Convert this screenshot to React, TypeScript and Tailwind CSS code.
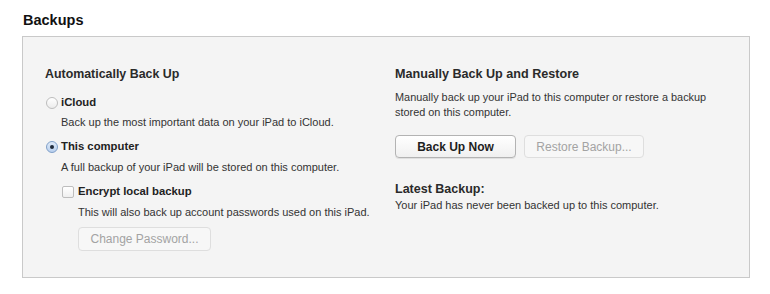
const font = { fontFamily: '"Liberation Sans", Arial, sans-serif' }

function Radio({ checked }: { checked?: boolean }) {
  return checked ? (
    <span className="flex h-[12px] w-[12px] items-center justify-center rounded-full border border-[#7f9fc8] bg-gradient-to-b from-[#dfeaf8] to-[#b9d0ee]">
      <span className="h-[4px] w-[4px] rounded-full bg-[#1f2a3a]" />
    </span>
  ) : (
    <span className="h-[12px] w-[12px] rounded-full border border-[#bdbdbd] bg-gradient-to-b from-white to-[#ececec]" />
  )
}

function Button({ label, disabled, w }: { label: string; disabled?: boolean; w: string }) {
  return (
    <div
      className={
        disabled
          ? `flex h-[23px] ${w} items-center justify-center rounded-[4px] border border-[#dedede] bg-[#f7f7f7] text-[12px] text-[#a3a3a3]`
          : `flex h-[23px] ${w} items-center justify-center rounded-[4px] border border-[#b3b3b3] bg-gradient-to-b from-white to-[#f0f0f0] text-[12px] font-bold text-[#1e1e1e] shadow-[0_1px_0_rgba(0,0,0,0.08)]`
      }
    >
      {label}
    </div>
  )
}

export default function App() {
  return (
    <div className="h-[294px] w-[770px] bg-white text-[#222]" style={font}>
      <h1 className="pl-[23px] pt-[11px] text-[14.5px] font-bold leading-[18px] text-[#111]">Backups</h1>
      <div className="ml-[22px] mt-[7px] grid h-[242px] w-[728px] grid-cols-[350px_1fr] border border-[#c9c9c9] bg-[#f4f4f4] pl-[22px] pt-[30px]">
        <div className="flex flex-col">
          <p className="text-[12.4px] font-bold leading-[15px] text-[#2a2a2a]">Automatically Back Up</p>
          <div className="mt-[13px] flex h-[15px] items-center gap-[3px] pl-[1px]">
            <Radio />
            <span className="text-[11.3px] font-bold text-[#222]">iCloud</span>
          </div>
          <p className="mt-[5px] pl-[16px] text-[11px] leading-[14px] text-[#333]">
            Back up the most important data on your iPad to iCloud.
          </p>
          <div className="mt-[10px] flex h-[15px] items-center gap-[3px] pl-[1px]">
            <Radio checked />
            <span className="text-[11.3px] font-bold text-[#222]">This computer</span>
          </div>
          <p className="mt-[6px] pl-[16px] text-[11px] leading-[14px] text-[#333]">
            A full backup of your iPad will be stored on this computer.
          </p>
          <div className="ml-[17px] mt-[10px] flex h-[15px] items-center gap-[4px]">
            <span className="h-[12px] w-[12px] rounded-[2px] border border-[#bdbdbd] bg-gradient-to-b from-white to-[#efefef]" />
            <span className="text-[11.3px] font-bold text-[#222]">Encrypt local backup</span>
          </div>
          <p className="mt-[6px] pl-[33px] text-[11px] leading-[14px] text-[#333]">
            This will also back up account passwords used on this iPad.
          </p>
          <div className="ml-[33px] mt-[8px]">
            <Button label="Change Password..." disabled w="w-[133px] h-[24px]" />
          </div>
        </div>
        <div className="flex flex-col">
          <p className="text-[12.6px] font-bold leading-[15px] text-[#2a2a2a]">Manually Back Up and Restore</p>
          <p className="mt-[8px] w-[320px] text-[10.9px] leading-[15px] text-[#333]">
            Manually back up your iPad to this computer or restore a backup stored on this computer.
          </p>
          <div className="mt-[15px] flex gap-[8px]">
            <Button label="Back Up Now" w="w-[121px]" />
            <Button label="Restore Backup..." disabled w="w-[120px]" />
          </div>
          <p className="mt-[24px] text-[12.5px] font-bold leading-[15px] text-[#2a2a2a]">Latest Backup:</p>
          <p className="mt-[1px] text-[11px] leading-[14px] text-[#333]">
            Your iPad has never been backed up to this computer.
          </p>
        </div>
      </div>
    </div>
  )
}
